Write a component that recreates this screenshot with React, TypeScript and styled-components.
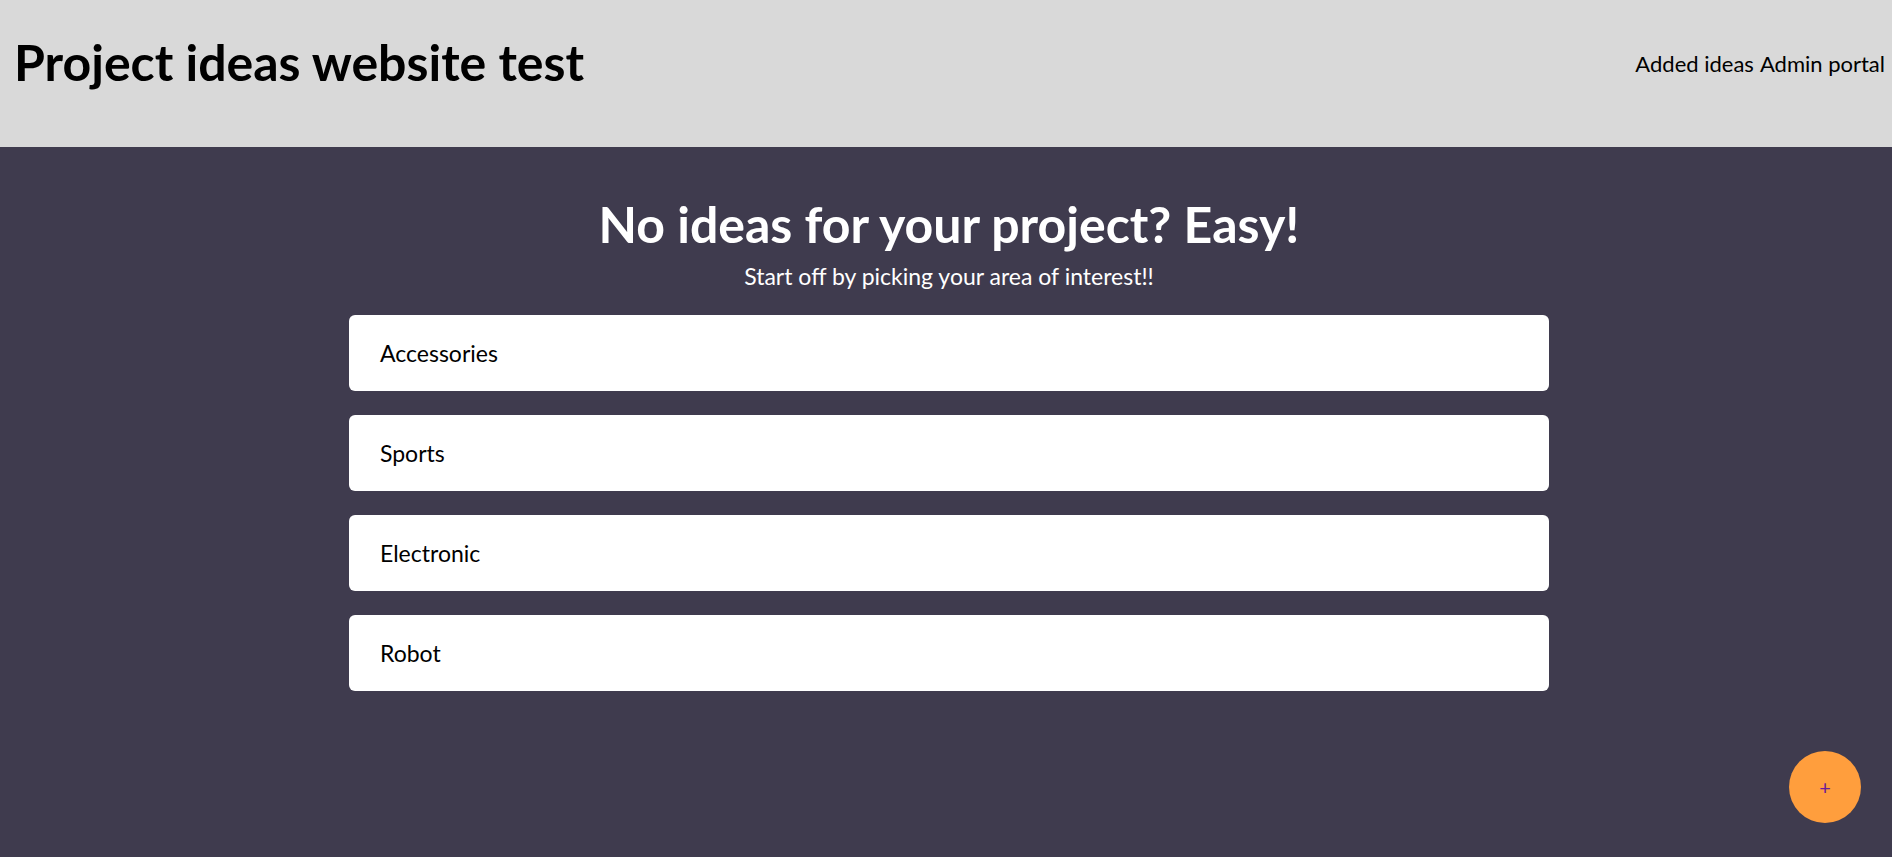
import React from "react";
import styled, { createGlobalStyle } from "styled-components";

const Global = createGlobalStyle`
  html, body { margin: 0; padding: 0; }
  body { font-family: "Lato", "Open Sans", sans-serif; background: #3f3b4e; }
`;

const Page = styled.div`
  min-height: 857px;
  display: flex;
  flex-direction: column;
  background: #3f3b4e;
`;

const Header = styled.header`
  height: 147px;
  background: #d9d9d9;
  display: flex;
  align-items: center;
  justify-content: space-between;
  padding: 0 7px 0 14px;
  box-sizing: border-box;
`;

const Title = styled.h1`
  margin: 0 0 24px 0;
  font-size: 50px;
  font-weight: 700;
  line-height: 1.2;
  color: #000;
`;

const Nav = styled.nav`
  display: flex;
  gap: 6px;
  margin-bottom: 20px;
`;

const NavLink = styled.a`
  font-size: 22px;
  color: #000;
  text-decoration: none;
`;

const Main = styled.main`
  flex: 1;
  display: flex;
  flex-direction: column;
  align-items: center;
  padding: 47px 0 0 6px;
`;

const Heading = styled.h2`
  margin: 0;
  font-size: 50px;
  font-weight: 700;
  color: #fff;
  line-height: 60px;
`;

const Subtitle = styled.p`
  margin: 8px 0 25px;
  font-size: 23px;
  line-height: 28px;
  color: #fff;
`;

const List = styled.div`
  display: flex;
  flex-direction: column;
  gap: 24px;
  width: 1200px;
`;

const Card = styled.div`
  height: 76px;
  background: #fff;
  border-radius: 6px;
  display: flex;
  align-items: center;
  padding-left: 31px;
  font-size: 23px;
  color: #000;
  cursor: pointer;
`;

const Fab = styled.button`
  position: fixed;
  right: 31px;
  bottom: 34px;
  width: 72px;
  height: 72px;
  border-radius: 50%;
  border: none;
  background: #ff9e3d;
  color: #6a1b9a;
  font-size: 20px;
  font-family: "Lato", sans-serif;
  display: flex;
  align-items: center;
  justify-content: center;
  cursor: pointer;
`;

const categories = ["Accessories", "Sports", "Electronic", "Robot"];

export default function App() {
  return (
    <Page>
      <Global />
      <Header>
        <Title>Project ideas website test</Title>
        <Nav>
          <NavLink href="#">Added ideas</NavLink>
          <NavLink href="#">Admin portal</NavLink>
        </Nav>
      </Header>
      <Main>
        <Heading>No ideas for your project? Easy!</Heading>
        <Subtitle>Start off by picking your area of interest!!</Subtitle>
        <List>
          {categories.map((c) => (
            <Card key={c}>{c}</Card>
          ))}
        </List>
      </Main>
      <Fab>+</Fab>
    </Page>
  );
}
